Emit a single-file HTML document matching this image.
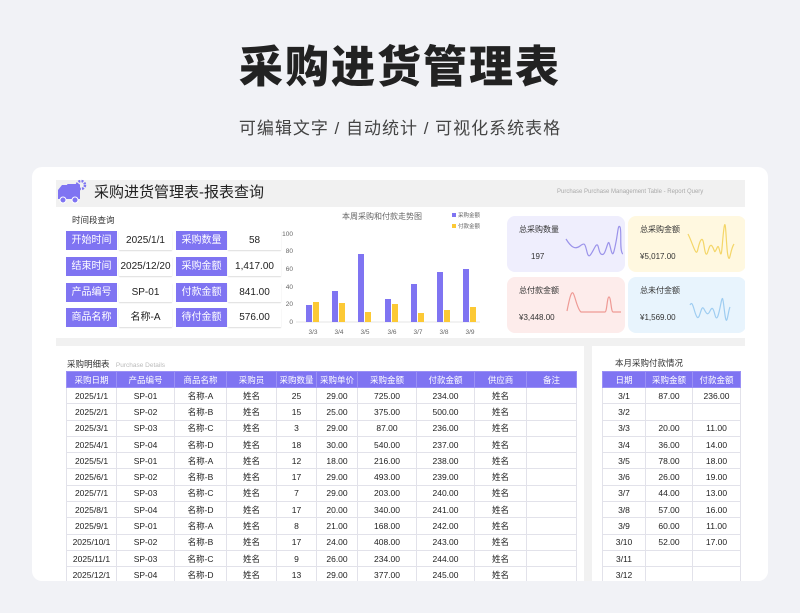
<!DOCTYPE html>
<html><head><meta charset="utf-8"><style>
*{margin:0;padding:0;box-sizing:border-box}
body{width:800px;height:613px;background:#f1f2f6;font-family:"Liberation Sans","Noto Sans CJK SC",sans-serif;position:relative;overflow:hidden;color:#333}
.abs{position:absolute}
h1{position:absolute;top:40px;width:800px;text-align:center;font-size:44px;font-weight:900;color:#222;letter-spacing:2px;line-height:56px}
.sub{position:absolute;top:114px;width:800px;text-align:center;font-size:17px;color:#444;letter-spacing:1px}
.card{position:absolute;left:32px;top:167px;width:736px;height:414px;background:#fff;border-radius:10px;overflow:hidden}
.lbl{position:absolute;height:19px;background:#7f74f2;color:#fff;font-size:10px;line-height:19px;text-align:center;width:51px}
.val{position:absolute;height:19px;font-size:10px;line-height:19px;text-align:center;width:53px;color:#222;box-shadow:0 1px 1px #ddd}
.kpi{position:absolute;width:118px;height:56px;border-radius:8px;font-size:8px;color:#333}
table{position:absolute;border-collapse:collapse;table-layout:fixed;font-size:8.5px;color:#222}
td,th{border:1px solid #e2e2ea;text-align:center;height:16.3px;padding:0;white-space:nowrap;overflow:hidden}
th{background:#7f74f2;color:#fff;font-weight:normal;height:16px;border-color:#9a90f5}
</style></head><body>
<h1>采购进货管理表</h1>
<div class="sub">可编辑文字 / 自动统计 / 可视化系统表格</div>
<div class="card">
 <div class="abs" style="left:24px;top:13px;width:689px;height:27px;background:#f1f1f1"></div>
 <svg class="abs" style="left:25px;top:12px" width="30" height="26" viewBox="0 0 30 26"><rect x="10" y="5" width="13" height="13" rx="1" fill="#7f74f2"/><path d="M1 18V11l4-5h6v12z" fill="#7f74f2"/><rect x="1" y="16" width="22" height="4" fill="#7f74f2"/><circle cx="6" cy="21" r="3" fill="#7f74f2" stroke="#fff"/><circle cx="18" cy="21" r="3" fill="#7f74f2" stroke="#fff"/><circle cx="24" cy="6" r="4" fill="none" stroke="#7f74f2" stroke-width="2.5" stroke-dasharray="2 1.2"/></svg>
 <div class="abs" style="left:62px;top:14px;font-size:15px;color:#222">采购进货管理表-报表查询</div>
 <div class="abs" style="left:525px;top:22px;font-size:6px;color:#aaa">Purchase Purchase Management Table - Report Query</div>
 <div class="abs" style="left:40px;top:47px;font-size:8.5px;color:#333">时间段查询</div>
 <div class="lbl" style="left:34px;top:64px">开始时间</div><div class="val" style="left:87px;top:64px">2025/1/1</div>
 <div class="lbl" style="left:144px;top:64px">采购数量</div><div class="val" style="left:196px;top:64px">58</div>
 <div class="lbl" style="left:34px;top:90px">结束时间</div><div class="val" style="left:87px;top:90px">2025/12/20</div>
 <div class="lbl" style="left:144px;top:90px">采购金额</div><div class="val" style="left:196px;top:90px">1,417.00</div>
 <div class="lbl" style="left:34px;top:116px">产品编号</div><div class="val" style="left:87px;top:116px">SP-01</div>
 <div class="lbl" style="left:144px;top:116px">付款金额</div><div class="val" style="left:196px;top:116px">841.00</div>
 <div class="lbl" style="left:34px;top:141px">商品名称</div><div class="val" style="left:87px;top:141px">名称-A</div>
 <div class="lbl" style="left:144px;top:141px">待付金额</div><div class="val" style="left:196px;top:141px">576.00</div>
 <svg class="abs" style="left:248px;top:42px" width="220" height="130" font-size="6.5" fill="#666" font-family="Liberation Sans,Noto Sans CJK SC,sans-serif">
  <text x="62" y="10" font-size="8">本周采购和付款走势图</text>
  <rect x="172" y="4" width="4" height="4" fill="#7f74f2"/><text x="178" y="8" font-size="5.5">采购金额</text>
  <rect x="172" y="15" width="4" height="4" fill="#fcc935"/><text x="178" y="19" font-size="5.5">付款金额</text>
  <g text-anchor="end"><text x="13" y="27">100</text><text x="13" y="44">80</text><text x="13" y="62">60</text><text x="13" y="80">40</text><text x="13" y="97">20</text><text x="13" y="115">0</text></g>
  <line x1="16" y1="113" x2="200" y2="113" stroke="#ccc" stroke-width=".6"/>
  <g transform="translate(-32,0)">
  <g fill="#7f74f2"><rect x="58" y="96" width="6" height="17"/><rect x="84" y="82" width="6" height="31"/><rect x="110" y="45" width="6" height="68"/><rect x="137" y="90" width="6" height="23"/><rect x="163" y="75" width="6" height="38"/><rect x="189" y="63" width="6" height="50"/><rect x="215" y="60" width="6" height="53"/></g>
  <g fill="#fcc935"><rect x="65" y="93" width="6" height="20"/><rect x="91" y="94" width="6" height="19"/><rect x="117" y="103" width="6" height="10"/><rect x="144" y="95" width="6" height="18"/><rect x="170" y="104" width="6" height="9"/><rect x="196" y="101" width="6" height="12"/><rect x="222" y="98" width="6" height="15"/></g>
  <g text-anchor="middle"><text x="65" y="125">3/3</text><text x="91" y="125">3/4</text><text x="117" y="125">3/5</text><text x="144" y="125">3/6</text><text x="170" y="125">3/7</text><text x="196" y="125">3/8</text><text x="222" y="125">3/9</text></g>
  </g>
 </svg>
 <div class="kpi" style="left:475px;top:49px;background:#efeefd"><span class="abs" style="left:12px;top:8px">总采购数量</span><span class="abs" style="left:24px;top:36px">197</span>
  <svg class="abs" style="left:54px;top:6px" width="62" height="42"><path d="M5 17C10 25 14 28 19 24S24 22 26 30 30 32 34 25 37 30 40 32 44 30 46 24 48 20 50 28 53 30 55 20 57 2 59 5 58 30 62 32" fill="none" stroke="#9b93ea" stroke-width="1.2"/></svg></div>
 <div class="kpi" style="left:596px;top:49px;background:#fff8e0"><span class="abs" style="left:12px;top:8px">总采购金额</span><span class="abs" style="left:12px;top:36px">¥5,017.00</span>
  <svg class="abs" style="left:56px;top:6px" width="62" height="42"><path d="M4 12C8 20 10 28 12 30S14 22 17 18 20 30 22 32 25 20 28 24 30 32 32 28 34 22 36 30 38 20 40 6 42 26 44 34 46 28 50 22" fill="none" stroke="#f4d668" stroke-width="1.2"/></svg></div>
 <div class="kpi" style="left:475px;top:110px;background:#fdeceb"><span class="abs" style="left:12px;top:8px">总付款金额</span><span class="abs" style="left:12px;top:36px">¥3,448.00</span>
  <svg class="abs" style="left:54px;top:4px" width="62" height="42"><path d="M6 30C8 20 10 10 12 12S16 28 20 31H44C46 31 46 16 48 16S50 31 52 31H60" fill="none" stroke="#ee9a95" stroke-width="1.2"/></svg></div>
 <div class="kpi" style="left:596px;top:110px;background:#e8f4fd"><span class="abs" style="left:12px;top:8px">总未付金额</span><span class="abs" style="left:12px;top:36px">¥1,569.00</span>
  <svg class="abs" style="left:56px;top:4px" width="62" height="42"><path d="M6 24C9 18 10 32 13 36S17 22 20 28 24 34 26 30 29 26 31 34 35 32 37 22 39 20 41 34 44 30 46 26" fill="none" stroke="#9fcdf1" stroke-width="1.2"/></svg></div>
 <div class="abs" style="left:24px;top:171px;width:689px;height:8px;background:#f1f1f1"></div>
 <div class="abs" style="left:552px;top:179px;width:8px;height:240px;background:#f1f1f1"></div>
 <div class="abs" style="left:713px;top:13px;width:23px;height:410px;background:#fff"></div>
 <div class="abs" style="left:35px;top:191px;font-size:8.5px;color:#333">采购明细表 <span style="font-size:6.5px;color:#bbb;margin-left:4px">Purchase Details</span></div>
 <table style="left:34px;top:204px;width:510px">
  <colgroup><col style="width:50px"><col style="width:58px"><col style="width:52px"><col style="width:50px"><col style="width:40px"><col style="width:41px"><col style="width:59px"><col style="width:58px"><col style="width:52px"><col style="width:50px"></colgroup>
  <tr><th>采购日期</th><th>产品编号</th><th>商品名称</th><th>采购员</th><th>采购数量</th><th>采购单价</th><th>采购金额</th><th>付款金额</th><th>供应商</th><th>备注</th></tr>
  <tr><td>2025/1/1</td><td>SP-01</td><td>名称-A</td><td>姓名</td><td>25</td><td>29.00</td><td>725.00</td><td>234.00</td><td>姓名</td><td></td></tr>
  <tr><td>2025/2/1</td><td>SP-02</td><td>名称-B</td><td>姓名</td><td>15</td><td>25.00</td><td>375.00</td><td>500.00</td><td>姓名</td><td></td></tr>
  <tr><td>2025/3/1</td><td>SP-03</td><td>名称-C</td><td>姓名</td><td>3</td><td>29.00</td><td>87.00</td><td>236.00</td><td>姓名</td><td></td></tr>
  <tr><td>2025/4/1</td><td>SP-04</td><td>名称-D</td><td>姓名</td><td>18</td><td>30.00</td><td>540.00</td><td>237.00</td><td>姓名</td><td></td></tr>
  <tr><td>2025/5/1</td><td>SP-01</td><td>名称-A</td><td>姓名</td><td>12</td><td>18.00</td><td>216.00</td><td>238.00</td><td>姓名</td><td></td></tr>
  <tr><td>2025/6/1</td><td>SP-02</td><td>名称-B</td><td>姓名</td><td>17</td><td>29.00</td><td>493.00</td><td>239.00</td><td>姓名</td><td></td></tr>
  <tr><td>2025/7/1</td><td>SP-03</td><td>名称-C</td><td>姓名</td><td>7</td><td>29.00</td><td>203.00</td><td>240.00</td><td>姓名</td><td></td></tr>
  <tr><td>2025/8/1</td><td>SP-04</td><td>名称-D</td><td>姓名</td><td>17</td><td>20.00</td><td>340.00</td><td>241.00</td><td>姓名</td><td></td></tr>
  <tr><td>2025/9/1</td><td>SP-01</td><td>名称-A</td><td>姓名</td><td>8</td><td>21.00</td><td>168.00</td><td>242.00</td><td>姓名</td><td></td></tr>
  <tr><td>2025/10/1</td><td>SP-02</td><td>名称-B</td><td>姓名</td><td>17</td><td>24.00</td><td>408.00</td><td>243.00</td><td>姓名</td><td></td></tr>
  <tr><td>2025/11/1</td><td>SP-03</td><td>名称-C</td><td>姓名</td><td>9</td><td>26.00</td><td>234.00</td><td>244.00</td><td>姓名</td><td></td></tr>
  <tr><td>2025/12/1</td><td>SP-04</td><td>名称-D</td><td>姓名</td><td>13</td><td>29.00</td><td>377.00</td><td>245.00</td><td>姓名</td><td></td></tr>
 </table>
 <div class="abs" style="left:583px;top:190px;font-size:8.5px;color:#333">本月采购付款情况</div>
 <table style="left:570px;top:204px;width:138px">
  <colgroup><col style="width:43px"><col style="width:47px"><col style="width:48px"></colgroup>
  <tr><th>日期</th><th>采购金额</th><th>付款金额</th></tr>
  <tr><td>3/1</td><td>87.00</td><td>236.00</td></tr>
  <tr><td>3/2</td><td></td><td></td></tr>
  <tr><td>3/3</td><td>20.00</td><td>11.00</td></tr>
  <tr><td>3/4</td><td>36.00</td><td>14.00</td></tr>
  <tr><td>3/5</td><td>78.00</td><td>18.00</td></tr>
  <tr><td>3/6</td><td>26.00</td><td>19.00</td></tr>
  <tr><td>3/7</td><td>44.00</td><td>13.00</td></tr>
  <tr><td>3/8</td><td>57.00</td><td>16.00</td></tr>
  <tr><td>3/9</td><td>60.00</td><td>11.00</td></tr>
  <tr><td>3/10</td><td>52.00</td><td>17.00</td></tr>
  <tr><td>3/11</td><td></td><td></td></tr>
  <tr><td>3/12</td><td></td><td></td></tr>
 </table>
</div>
</body></html>
